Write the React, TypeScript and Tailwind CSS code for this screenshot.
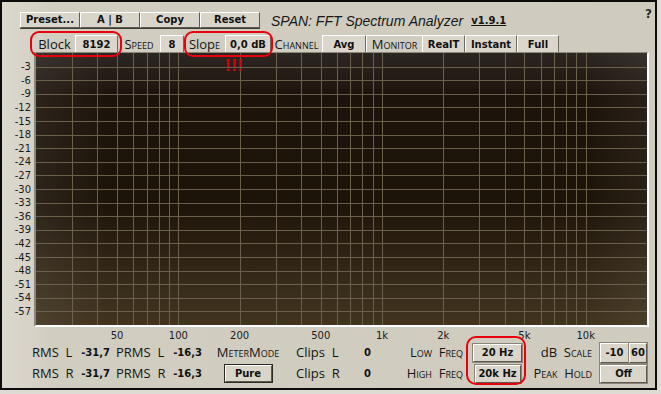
import type { ReactNode } from "react";
import clsx from "clsx";

const GRAPH_W = 611;
const GRAPH_H = 272;

const gridFreqs = [
  30, 40, 50, 60, 70, 80, 90, 100, 200, 300, 400, 500, 600, 700, 800, 900,
  1000, 2000, 3000, 4000, 5000, 6000, 7000, 8000, 9000, 10000,
];

const axisLabels = [
  { f: 50, label: "50" },
  { f: 100, label: "100" },
  { f: 200, label: "200" },
  { f: 500, label: "500" },
  { f: 1000, label: "1k" },
  { f: 2000, label: "2k" },
  { f: 5000, label: "5k" },
  { f: 10000, label: "10k" },
];

const dbLabels = Array.from({ length: 19 }, (_, i) => `-${(i + 1) * 3}`);

// 20 Hz .. 20 kHz over three decades
const freqX = (f: number) => (GRAPH_W * Math.log10(f / 20)) / 3;

const mono = "font-['DejaVu_Sans',sans-serif]";
const label = "font-['Open_Sans',sans-serif] text-[13px] text-[#151515] leading-none";
const sc = "[font-variant-caps:small-caps]";

function Bevel({
  children,
  className,
}: {
  children: ReactNode;
  className?: string;
}) {
  return (
    <div
      className={clsx(
        "flex items-center justify-center border-t border-l border-t-white border-l-white border-r border-b border-r-[#5d594f] border-b-[#5d594f] bg-[#d9d5ca] text-[10px] font-bold leading-none text-[#111]",
        mono,
        className,
      )}
    >
      {children}
    </div>
  );
}

function Tab({ children, w }: { children: ReactNode; w: string }) {
  return (
    <div
      className={clsx(
        "flex h-full items-center justify-center border-t border-l border-t-white border-l-white border-r border-r-[#6f6a5e] bg-[#dad6cb] pt-[1px] text-[10px] font-bold leading-none text-[#111]",
        mono,
        w,
      )}
    >
      {children}
    </div>
  );
}

function TabLabel({ children, w }: { children: ReactNode; w: string }) {
  return (
    <div
      className={clsx(
        "flex h-full items-center justify-center pt-[1px]",
        label,
        w,
      )}
    >
      {children}
    </div>
  );
}

function Value({
  children,
  left,
}: {
  children: ReactNode;
  left?: boolean;
}) {
  return (
    <span
      className={clsx(
        "text-[10px] font-bold leading-none text-[#111]",
        mono,
        left ? "pl-[19px] text-left" : "pr-[2px] text-right",
      )}
    >
      {children}
    </span>
  );
}

function Spectrum() {
  return (
    <svg width={GRAPH_W} height={GRAPH_H} className="block">
      <defs>
        <linearGradient id="bg" x1="0" y1="0" x2="0" y2="1">
          <stop offset="0" stopColor="#2c2622" />
          <stop offset="0.16" stopColor="#1c130b" />
          <stop offset="0.55" stopColor="#1d1409" />
          <stop offset="0.85" stopColor="#372b1a" />
          <stop offset="1" stopColor="#41341f" />
        </linearGradient>
        <linearGradient id="side" x1="0" y1="0" x2="1" y2="0">
          <stop offset="0" stopColor="#ffffff" stopOpacity="0.07" />
          <stop offset="0.12" stopColor="#ffffff" stopOpacity="0" />
          <stop offset="0.9" stopColor="#ffffff" stopOpacity="0" />
          <stop offset="1" stopColor="#ffeedd" stopOpacity="0.06" />
        </linearGradient>
      </defs>
      <rect width={GRAPH_W} height={GRAPH_H} fill="url(#bg)" />
      <rect width={GRAPH_W} height={GRAPH_H} fill="url(#side)" />
      <g stroke="#6a604b" strokeWidth={1} shapeRendering="crispEdges">
        {gridFreqs.map((f) => {
          const x = Math.round(freqX(f)) + 0.5;
          return <line key={f} x1={x} x2={x} y1={0} y2={GRAPH_H} />;
        })}
        {dbLabels.map((_, i) => {
          const y = Math.round(((i + 1) * GRAPH_H) / 20) + 0.5;
          return <line key={i} x1={0} x2={GRAPH_W} y1={y} y2={y} />;
        })}
      </g>
    </svg>
  );
}

export default function App() {
  return (
    <div className="relative h-[394px] w-[661px] overflow-hidden bg-[#dedbd3]">
      <div className="flex h-[390px] w-[657px] flex-col border-2 border-[#0c0c0c] bg-[linear-gradient(to_right,#dcd8ce,#d1cdc1_8%,#cfcbbf)]">
        {/* Preset buttons + title */}
        <div className="mt-[10px] flex h-[17px] items-center pl-[18px]">
          <div className="flex h-full border-b border-[#3e3b34]">
            {["Preset...", "A | B", "Copy", "Reset"].map((t) => (
              <Bevel key={t} className="h-full w-[60px] whitespace-pre">
                {t}
              </Bevel>
            ))}
          </div>
          <span className="ml-[11px] font-['Liberation_Sans',sans-serif] text-[14px] italic leading-none text-[#181818]">
            SPAN: FFT Spectrum Analyzer
          </span>
          <span
            className={clsx(
              "ml-[8px] text-[10px] font-bold leading-none text-[#151515] underline",
              mono,
            )}
          >
            v1.9.1
          </span>
          <span
            className={clsx(
              "ml-auto mr-[3px] -mt-[14px] self-center text-[12px] font-bold leading-none text-[#2a2a2a]",
              mono,
            )}
          >
            ?
          </span>
        </div>

        {/* Tabs */}
        <div className="mt-[6px] flex h-[17px] items-stretch pl-[32px]">
          <TabLabel w="w-[41px]">Block</TabLabel>
          <Tab w="w-[43px]">8192</Tab>
          <TabLabel w="w-[42px]">
            <span className={sc}>Speed</span>
          </TabLabel>
          <Tab w="w-[24px]">8</Tab>
          <TabLabel w="w-[41px]">
            Slop<span className={sc}>e</span>
          </TabLabel>
          <Tab w="w-[46px]">0,0 dB</Tab>
          <TabLabel w="w-[51px]">
            <span className={sc}>Channel</span>
          </TabLabel>
          <Tab w="w-[44px]">Avg</Tab>
          <div
            className={clsx(
              "flex h-full w-[56px] items-center justify-center border-t border-l border-t-white border-l-white pt-[1px]",
              label,
            )}
          >
            <span className={sc}>Monitor</span>
          </div>
          <Tab w="w-[43px]">RealT</Tab>
          <Tab w="w-[52px]">Instant</Tab>
          <Tab w="w-[42px]">Full</Tab>
        </div>

        {/* Graph */}
        <div className="flex h-[275px]">
          <div
            className={clsx(
              "flex w-[32px] flex-col items-end pt-[8.5px] pr-[3px] text-[10px] text-[#1a1a1a]",
              mono,
            )}
          >
            {dbLabels.map((d) => (
              <div key={d} className="flex h-[13.6px] items-center leading-none">
                {d}
              </div>
            ))}
          </div>
          <div className="h-[275px] w-[615px] border-t border-l-2 border-r-2 border-b-2 border-t-[#8c877b] border-l-[#8c877b] border-r-white border-b-white">
            <Spectrum />
          </div>
        </div>

        {/* Frequency axis */}
        <div
          className={clsx(
            "relative ml-[34px] h-[15px] text-[10px] leading-none text-[#1a1a1a]",
            mono,
          )}
        >
          {axisLabels.map((a) => (
            <span
              key={a.label}
              className="absolute top-[4px] -translate-x-1/2"
              style={{ left: freqX(a.f) }}
            >
              {a.label}
            </span>
          ))}
        </div>

        {/* Meters and settings */}
        <div className="grid grid-cols-[46px_34px_56px_36px_88px_53px_45px_78px_59px_70px_53px] grid-rows-[21px_21px] items-center pl-[30px]">
          <span className={label}>RMS&nbsp; L</span>
          <Value>-31,7</Value>
          <span className={clsx(label, "pl-[4px]")}>PRMS&nbsp;&nbsp;L</span>
          <Value>-16,3</Value>
          <span className={clsx(label, sc, "text-center")}>MeterMode</span>
          <span className={clsx(label, "pl-[4px]")}>Clips&nbsp;&nbsp;L</span>
          <Value left>0</Value>
          <span className={clsx(label, sc, "pr-[5px] text-right")}>
            Low&nbsp; Freq
          </span>
          <div className="flex justify-center">
            <Bevel className="h-[18px] w-[49px] shadow-[0_0_0_1px_#8a8578]">
              20 Hz
            </Bevel>
          </div>
          <span className={clsx(label, "pr-[5px] text-right")}>
            dB&nbsp; <span className={sc}>Scale</span>
          </span>
          <div className="flex pl-[3px]">
            <Bevel className="h-[20px] w-[29px] shadow-[0_0_0_1px_#8a8578]">
              -10
            </Bevel>
            <Bevel className="h-[20px] w-[18px] shadow-[0_0_0_1px_#8a8578]">
              60
            </Bevel>
          </div>

          <span className={label}>RMS&nbsp; R</span>
          <Value>-31,7</Value>
          <span className={clsx(label, "pl-[4px]")}>PRMS&nbsp;&nbsp;R</span>
          <Value>-16,3</Value>
          <div className="flex justify-center">
            <Bevel className="h-[17px] w-[47px] shadow-[0_0_0_1px_#2c2a25]">
              Pure
            </Bevel>
          </div>
          <span className={clsx(label, "pl-[4px]")}>Clips&nbsp; R</span>
          <Value left>0</Value>
          <span className={clsx(label, sc, "pr-[5px] text-right")}>
            High&nbsp; Freq
          </span>
          <div className="flex justify-center">
            <Bevel className="h-[18px] w-[46px] shadow-[0_0_0_1px_#8a8578]">
              20k Hz
            </Bevel>
          </div>
          <span className={clsx(label, sc, "pr-[5px] text-right")}>
            Peak&nbsp; Hold
          </span>
          <div className="flex pl-[3px]">
            <Bevel className="h-[18px] w-[47px] shadow-[0_0_0_1px_#8a8578]">
              Off
            </Bevel>
          </div>
        </div>
      </div>

      {/* Red annotations drawn over the UI */}
      <div className="pointer-events-none absolute left-[30px] top-[31px] h-[26px] w-[92px] rounded-[9px] border-2 border-[#e8000b]" />
      <div className="pointer-events-none absolute left-[184px] top-[31px] h-[26px] w-[89px] rounded-[9px] border-2 border-[#e8000b]" />
      <div className="pointer-events-none absolute left-[466px] top-[336px] h-[49px] w-[60px] rounded-[10px] border-2 border-[#e8000b]" />
      <span className="pointer-events-none absolute left-[225px] top-[57px] font-['Liberation_Sans',sans-serif] text-[17px] font-bold leading-none tracking-[0.5px] text-[#d80008]">
        !!!
      </span>
    </div>
  );
}
